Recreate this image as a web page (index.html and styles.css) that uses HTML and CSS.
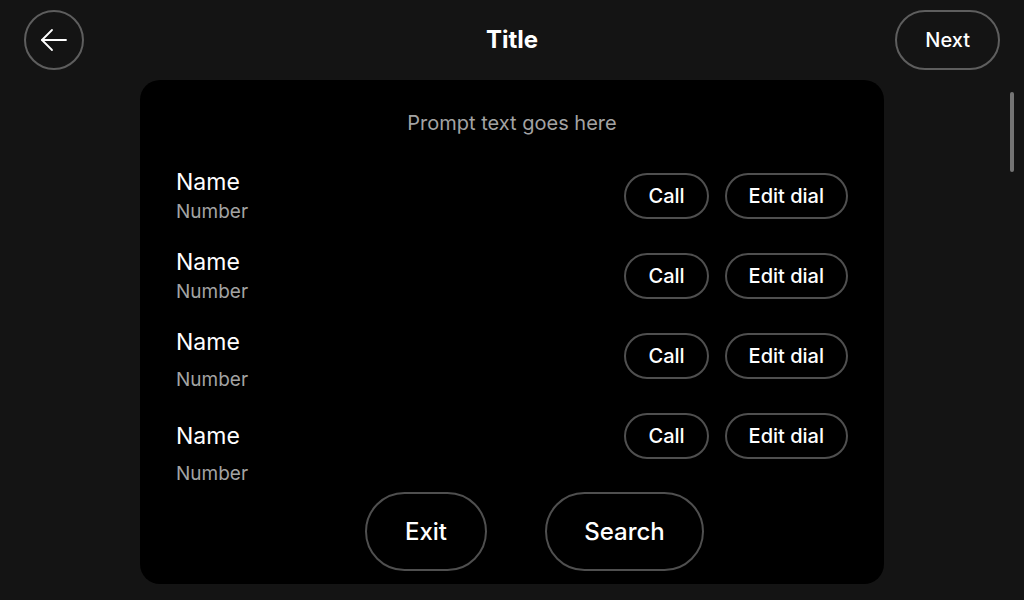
FILE: index.html
```html
<!DOCTYPE html>
<html lang="en">
<head>
<meta charset="UTF-8">
<title>Title</title>
<link rel="stylesheet" href="styles.css">
</head>
<body>
<!-- Top bar -->
<header class="topbar">
<button class="back-btn" aria-label="Back">
<svg width="28" height="28" viewBox="0 0 28 28" fill="none" stroke="#fff" stroke-width="1.8" stroke-linecap="round" stroke-linejoin="round">
<path d="M2 14h24"/>
<path d="M12 4L2 14l10 10"/>
</svg>
</button>
<h1 class="title">Title</h1>
<button class="pill next-btn">Next</button>
</header>

<div class="scrollbar"></div>

<!-- Dial list card -->
<main class="card">
<p class="prompt">Prompt text goes here</p>

<div class="contact">
<div class="info">
<div class="name">Name</div>
<div class="number">Number</div>
</div>
<div class="row-actions">
<button class="pill small">Call</button>
<button class="pill small">Edit dial</button>
</div>
</div>

<div class="contact">
<div class="info">
<div class="name">Name</div>
<div class="number">Number</div>
</div>
<div class="row-actions">
<button class="pill small">Call</button>
<button class="pill small">Edit dial</button>
</div>
</div>

<div class="contact loose">
<div class="info">
<div class="name">Name</div>
<div class="number">Number</div>
</div>
<div class="row-actions">
<button class="pill small">Call</button>
<button class="pill small">Edit dial</button>
</div>
</div>

<div class="contact loose last">
<div class="info">
<div class="name">Name</div>
<div class="number">Number</div>
</div>
<div class="row-actions">
<button class="pill small">Call</button>
<button class="pill small">Edit dial</button>
</div>
</div>

<div class="card-actions">
<button class="pill large exit">Exit</button>
<button class="pill large search">Search</button>
</div>
</main>
</body>
</html>
```

FILE: styles.css
```css
* {
box-sizing: border-box;
}

body {
margin: 0;
height: 600px;
overflow: hidden;
background: #141414;
color: #fff;
font-family: Inter, "Noto Sans", sans-serif;
position: relative;
}

button {
font-family: inherit;
color: #fff;
background: transparent;
cursor: pointer;
}

.topbar {
display: grid;
grid-template-columns: 1fr auto 1fr;
align-items: center;
height: 80px;
padding: 10px 24px;
}

.back-btn {
width: 60px;
height: 60px;
border-radius: 50%;
border: 2px solid #5e5e5e;
display: flex;
align-items: center;
justify-content: center;
padding: 0;
}

.back-btn svg {
display: block;
}

.title {
margin: 0;
font-size: 24px;
font-weight: 700;
line-height: 30px;
}

.pill {
border: 2px solid #4f4f4f;
border-radius: 999px;
font-weight: 500;
white-space: nowrap;
}

.next-btn {
justify-self: end;
height: 60px;
padding: 0 28px;
font-size: 20px;
border-color: #5e5e5e;
}

.scrollbar {
position: absolute;
top: 92px;
right: 10px;
width: 4px;
height: 80px;
border-radius: 2px;
background: #747474;
}

.card {
width: 744px;
height: 504px;
margin: 0 auto;
background: #000;
border-radius: 20px;
padding: 31px 36px 12px;
display: flex;
flex-direction: column;
}

.prompt {
margin: 0 0 38px;
text-align: center;
font-size: 20px;
line-height: 24px;
color: #a3a3a3;
}

.contact {
display: flex;
justify-content: space-between;
align-items: flex-start;
height: 80px;
flex-shrink: 0;
}

.contact.last {
height: 72px;
}

.info {
display: flex;
flex-direction: column;
gap: 6px;
margin-top: -4px;
}

.contact.loose .info {
gap: 14px;
}

.contact.last .info {
margin-top: 10px;
}

.name {
font-size: 23px;
line-height: 26px;
}

.number {
font-size: 19px;
line-height: 22px;
color: #a3a3a3;
}

.row-actions {
display: flex;
gap: 16px;
}

.small {
height: 46px;
padding: 0 22px;
font-size: 20px;
}

.card-actions {
display: flex;
justify-content: center;
gap: 58px;
margin-top: 7px;
padding-left: 45px;
}

.large {
height: 79px;
font-size: 24px;
}

.exit {
width: 122px;
}

.search {
width: 159px;
}
```
